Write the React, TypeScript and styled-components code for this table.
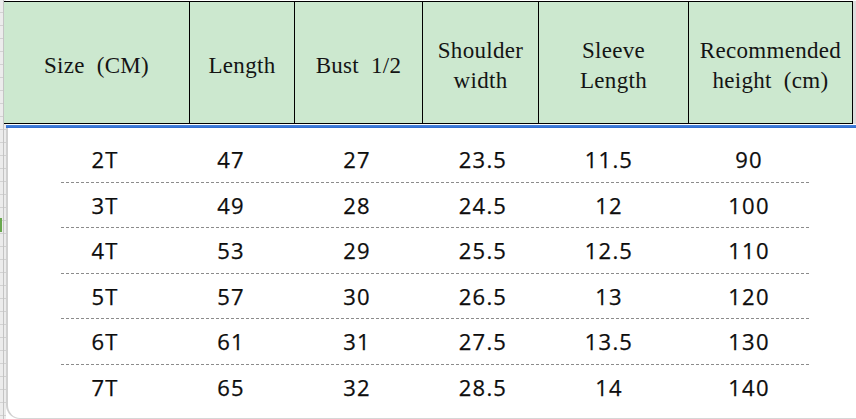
import React from "react";
import styled, { createGlobalStyle } from "styled-components";

const GlobalStyle = createGlobalStyle`
  html, body { margin: 0; padding: 0; background: #ffffff; overflow: hidden; }
  * { box-sizing: border-box; }
`;

const Page = styled.div`
  width: 856px;
  height: 419px;
  display: flex;
  flex-direction: column;
  background:
    linear-gradient(#6aa84f, #6aa84f) 0 218px / 2px 14px no-repeat,
    linear-gradient(#c4c4c4, #c4c4c4) 3px 0 / 1px 100% no-repeat,
    repeating-linear-gradient(to bottom, transparent 0 12px, #d2d2d2 12px 13px) 0 0 / 6px 100% no-repeat,
    linear-gradient(#ececec, #ececec) 0 0 / 6px 100% no-repeat,
    #ffffff;
`;

const HeaderBand = styled.div`
  margin-top: 1px;
  padding-left: 4px;
  display: flex;
  background: linear-gradient(to left, #dddddd 3px, transparent 3px);
`;

const Header = styled.div`
  display: grid;
  grid-template-columns: 186px 105px 128px 116px 150px 164px;
  height: 123px;
  background: #cce8cf;
  border-top: 1px solid #000;
  border-bottom: 1px solid #000;
`;

const HeadCell = styled.div`
  display: flex;
  align-items: center;
  justify-content: center;
  text-align: center;
  padding-top: 7px;
  border-right: 1px solid #000;
  font-family: "Liberation Serif", "Times New Roman", serif;
  font-size: 23px;
  letter-spacing: 0.3px;
  word-spacing: 6px;
  line-height: 30px;
  color: #141414;
  white-space: pre;
`;

const BlueRule = styled.div`
  margin: 1px 0 0 6px;
  height: 3px;
  background: linear-gradient(#4a86dc, #2d6bcf);
`;

const Card = styled.div`
  flex: 1;
  margin-left: 6px;
  background: #ffffff;
  border-left: 2px solid #d0d0d0;
  border-bottom: 1px solid #d6d6d6;
  border-bottom-left-radius: 14px;
  padding: 9px 0 0 34px;
`;

const BodyRow = styled.div<{ $last?: boolean }>`
  display: grid;
  grid-template-columns: 126px 126px 126px 126px 126px 154px;
  width: 784px;
  height: 45.6px;
  background: ${(p) =>
    p.$last
      ? "none"
      : "repeating-linear-gradient(to right, #8c8c8c 0 3px, transparent 3px 5px) 19px 100% / 748px 1px no-repeat"};
`;

const BodyCell = styled.div`
  text-align: center;
  padding-top: 10px;
  font-family: "Open Sans", "Noto Sans", sans-serif;
  font-size: 22px;
  font-weight: 500;
  letter-spacing: 1.2px;
  line-height: 24px;
  color: #0d0d0d;
  -webkit-text-stroke: 0.25px #0d0d0d;
`;

const headers = [
  "Size (CM)",
  "Length",
  "Bust 1/2",
  "Shoulder\nwidth",
  "Sleeve\nLength",
  "Recommended\nheight (cm)",
];

const rows = [
  ["2T", "47", "27", "23.5", "11.5", "90"],
  ["3T", "49", "28", "24.5", "12", "100"],
  ["4T", "53", "29", "25.5", "12.5", "110"],
  ["5T", "57", "30", "26.5", "13", "120"],
  ["6T", "61", "31", "27.5", "13.5", "130"],
  ["7T", "65", "32", "28.5", "14", "140"],
];

export default function App() {
  return (
    <>
      <GlobalStyle />
      <Page>
        <HeaderBand>
          <Header>
            {headers.map((h) => (
              <HeadCell key={h}>{h}</HeadCell>
            ))}
          </Header>
        </HeaderBand>
        <BlueRule />
        <Card>
          {rows.map((r, i) => (
            <BodyRow key={r[0]} $last={i === rows.length - 1}>
              {r.map((v, j) => (
                <BodyCell key={j}>{v}</BodyCell>
              ))}
            </BodyRow>
          ))}
        </Card>
      </Page>
    </>
  );
}
